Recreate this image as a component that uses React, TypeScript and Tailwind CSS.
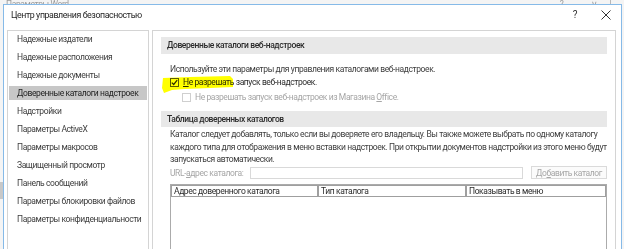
import React from "react";

const navItems = [
  "Надежные издатели",
  "Надежные расположения",
  "Надежные документы",
  "Доверенные каталоги надстроек",
  "Надстройки",
  "Параметры ActiveX",
  "Параметры макросов",
  "Защищенный просмотр",
  "Панель сообщений",
  "Параметры блокировки файлов",
  "Параметры конфиденциальности",
];

function CheckBox({ checked, disabled }: { checked?: boolean; disabled?: boolean }) {
  return (
    <span
      className={
        "flex h-[9px] w-[9px] shrink-0 items-center justify-center border bg-white " +
        (disabled ? "border-[#cfcfcf]" : "border-[#5a5a5a]")
      }
    >
      {checked && (
        <svg width="7" height="7" viewBox="0 0 7 7">
          <path d="M0.8 3.6 L2.7 5.5 L6.2 1.2" fill="none" stroke="#2b2b2b" strokeWidth="1.2" />
        </svg>
      )}
    </span>
  );
}

function App() {
  return (
    <div
      className="relative flex h-[249px] w-[624px] flex-col overflow-hidden bg-white text-[8.5px] tracking-[-0.4px] text-[#3d3d3d]"
      style={{ fontFamily: 'Roboto, "Noto Sans", sans-serif' }}
    >
      {/* background window peeking out */}
      <div className="relative flex h-[4px] items-end overflow-hidden bg-[#f4f4f4]">
        <span className="-mb-[6px] ml-[6px] whitespace-nowrap leading-[12px] text-[#9a9a9a]">Параметры Word</span>
        <span className="-mb-[6px] ml-auto mr-[28px] leading-[12px] text-[#9a9a9a]">?</span>
        <span className="-mb-[6px] mr-[12px] leading-[12px] text-[#9a9a9a]">∨</span>
        <span className="h-full w-px bg-[#b8b8b8]" />
        <span className="w-[13px]" />
      </div>

      <div className="flex flex-1">
        <div className="w-[3px] bg-[#f4f4f4] pt-[178px]">
          <div className="h-[17px] w-[3px] bg-[#c8c8c8]" />
        </div>

        {/* dialog */}
        <div className="flex w-[619px] flex-col border border-b-0 border-[#86bae8] bg-white">
          <div className="flex h-[25px] shrink-0 items-start pt-[4px]">
            <span className="pl-[7px] text-[8.8px] leading-[12px] text-[#1f1f1f]">Центр управления безопасностью</span>
            <span className="ml-auto mr-px text-[10px] leading-[12px] text-[#333]">?</span>
            <svg className="ml-[23px] mr-[10px] mt-[1px]" width="10" height="10" viewBox="0 0 10 10">
              <path d="M0.5 0.5 L9.5 9.5 M9.5 0.5 L0.5 9.5" stroke="#333" strokeWidth="1" />
            </svg>
          </div>

          <div className="flex flex-1 gap-[3px] pl-[3px] pr-[5px]">
            {/* left nav */}
            <div className="flex w-[142px] flex-col gap-[4px] border border-b-0 border-[#d4d4d4] pt-[1px]">
              {navItems.map((item, i) => (
                <div
                  key={item}
                  className={
                    "mx-px h-[14px] whitespace-nowrap pl-[8px] leading-[14px] " +
                    (i === 3 ? "bg-[#c7c7c7] text-[#1f1f1f]" : "")
                  }
                >
                  {item}
                </div>
              ))}
            </div>

            {/* right content */}
            <div className="flex flex-1 flex-col border border-b-0 border-[#d4d4d4]">
              <div className="mx-[8px] mt-[6px] h-[17px] bg-[#e8e8e8] pl-[6px] font-medium leading-[17px] text-[#2b2b2b]">
                Доверенные каталоги веб-надстроек
              </div>

              <div className="ml-[17px] mt-[9px] h-[13px] leading-[13px]">
                Используйте эти параметры для управления каталогами веб-надстроек.
              </div>
              <div className="ml-[17px] flex h-[13px] items-center gap-[4px] leading-[13px] text-[#2b2b2b]">
                <CheckBox checked />
                <span>
                  <span className="underline">Н</span>е разрешать запуск веб-надстроек.
                </span>
              </div>
              <div className="ml-[29px] mt-[2px] flex h-[13px] items-center gap-[4px] leading-[13px] text-[#a6a6a6]">
                <CheckBox disabled />
                <span>
                  Не разрешать запуск веб-надстроек из Магазина <span className="underline">O</span>ffice.
                </span>
              </div>

              <div className="mx-[8px] mt-[7px] h-[16px] bg-[#e8e8e8] pl-[6px] font-medium leading-[16px] text-[#2b2b2b]">
                Таблица доверенных каталогов
              </div>

              <div className="ml-[17px] mt-[1px] whitespace-nowrap leading-[12.5px]">
                Каталог следует добавлять, только если вы доверяете его владельцу. Вы также можете выбрать по одному каталогу
                <br />
                каждого типа для отображения в меню вставки надстроек. При открытии документов надстройки из этого меню будут
                <br />
                запускаться автоматически.
              </div>

              <div className="ml-[17px] mr-[8px] mt-px flex h-[12px] items-center text-[#a6a6a6]">
                <span className="w-[80px] shrink-0 whitespace-nowrap leading-[12px]">
                  URL-<span className="underline">а</span>дрес каталога:
                </span>
                <div className="h-[12px] w-[273px] shrink-0 border border-[#d9d9d9]" />
                <div className="ml-auto flex h-[13px] w-[76px] shrink-0 items-center justify-center whitespace-nowrap border border-[#dadada] bg-[#fbfbfb] leading-[12px]">
                  До<span className="underline">б</span>авить каталог
                </div>
              </div>

              <div className="ml-[17px] mr-[8px] mt-[5px] flex flex-1 flex-col border border-b-0 border-[#ababab]">
                <div className="flex h-[12px] text-[#2b2b2b]">
                  <div className="w-[147px] whitespace-nowrap border border-[#9f9f9f] pl-[2px] leading-[10px]">Адрес доверенного каталога</div>
                  <div className="w-[148px] whitespace-nowrap border border-[#9f9f9f] pl-[2px] leading-[10px]">Тип каталога</div>
                  <div className="flex-1 whitespace-nowrap border border-[#9f9f9f] pl-[2px] leading-[10px]">Показывать в меню</div>
                </div>
              </div>
            </div>
          </div>
        </div>
        <div className="w-[2px] bg-[#f4f4f4]" />
      </div>

      {/* highlighter mark */}
      <svg
        className="pointer-events-none absolute left-0 top-0 mix-blend-multiply"
        width="624"
        height="249"
        viewBox="0 0 624 249"
      >
        <path
          d="M163 78 L190 77 L230 76 L233 79 L233 87 L210 88 L185 89 L172 90 L164 93 L162 88 Z"
          fill="#ffff00"
        />
      </svg>
    </div>
  );
}

export default App;
